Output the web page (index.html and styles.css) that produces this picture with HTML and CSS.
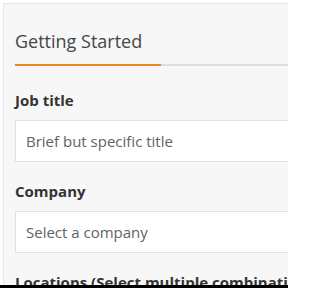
FILE: index.html
```html
<!DOCTYPE html>
<html>
<head>
<meta charset="utf-8">
<link rel="stylesheet" href="styles.css">
</head>
<body>
<div class="page">
  <div class="panel">
    <div class="tabs">
      <div class="tab active">Getting Started</div>
      <div class="tab-rest"></div>
    </div>
    <div class="field">
      <div class="label">Job title</div>
      <div class="input">Brief but specific title</div>
    </div>
    <div class="field">
      <div class="label">Company</div>
      <div class="input">Select a company</div>
    </div>
    <div class="field">
      <div class="label">Locations (Select multiple combinations)</div>
    </div>
  </div>
  <div class="footer"></div>
</div>
</body>
</html>
```
FILE: styles.css
```css
html, body {
  margin: 0;
  padding: 0;
  background: #ffffff;
  overflow: hidden;
}
.page {
  height: 288px;
  width: 288px;
  overflow: hidden;
  display: flex;
  flex-direction: column;
  font-family: "Open Sans", "Noto Sans", sans-serif;
}
.panel {
  flex: 1;
  min-height: 0;
  overflow: hidden;
  margin: 3px 0 0 3px;
  border-top: 1px solid #e6e6e6;
  border-left: 1px solid #e6e6e6;
  background: #f7f7f7;
  padding: 24px 0 0 11px;
}
.tabs {
  display: flex;
  align-items: flex-end;
}
.tab {
  font-size: 18px;
  line-height: 26px;
  color: #454545;
  width: 146px;
  flex: none;
  padding-bottom: 10px;
  border-bottom: 2px solid #e8862a;
}
.tab-rest {
  flex: 1;
  border-bottom: 2px solid #dedede;
}
.field {
  margin-top: 24px;
}
.field + .field {
  margin-top: 19px;
}
.label {
  font-size: 15px;
  font-weight: 700;
  line-height: 20px;
  color: #333333;
  white-space: nowrap;
}
.input {
  margin-top: 10px;
  box-sizing: border-box;
  height: 42px;
  width: 400px;
  border: 1px solid #e2e2e2;
  background: #ffffff;
  padding: 0 10px;
  display: flex;
  align-items: center;
  font-size: 15px;
  color: #626262;
}
.footer {
  height: 3px;
  background: #000;
  flex: none;
}
```
